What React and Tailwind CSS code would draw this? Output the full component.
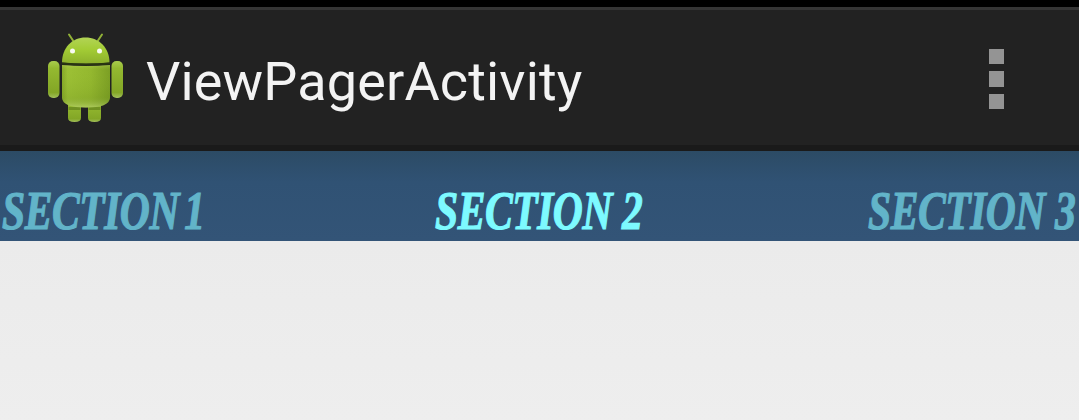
import React from 'react';

function AndroidLogo() {
  return (
    <svg className="mt-[3px] ml-[44px] h-[96px] w-[84px] shrink-0" viewBox="0 0 84 96">
      <defs>
        <linearGradient id="body" x1="0" x2="1" y1="0" y2="0">
          <stop offset="0" stopColor="#86a828" />
          <stop offset="0.12" stopColor="#9cc035" />
          <stop offset="0.6" stopColor="#94b82f" />
          <stop offset="1" stopColor="#7c9f24" />
        </linearGradient>
        <linearGradient id="head" x1="0" x2="0" y1="0" y2="1">
          <stop offset="0" stopColor="#b2d455" />
          <stop offset="0.45" stopColor="#a3cc35" />
          <stop offset="1" stopColor="#8cb02c" />
        </linearGradient>
        <linearGradient id="limb" x1="0" x2="0" y1="0" y2="1">
          <stop offset="0" stopColor="#a9cc4d" />
          <stop offset="0.2" stopColor="#94b930" />
          <stop offset="0.85" stopColor="#83a626" />
          <stop offset="1" stopColor="#a2bf5b" />
        </linearGradient>
        <linearGradient id="shade" x1="0" x2="0" y1="0" y2="1">
          <stop offset="0" stopColor="#d1e77d" stopOpacity="0.3" />
          <stop offset="0.12" stopColor="#8eb32b" stopOpacity="0" />
          <stop offset="0.75" stopColor="#587914" stopOpacity="0.15" />
          <stop offset="1" stopColor="#c6dc88" stopOpacity="0.5" />
        </linearGradient>
      </defs>
      <path d="M25 3.5L30 11M58 3.5L53 11" stroke="#90b037" strokeWidth="2" strokeLinecap="round" />
      <path d="M24 70H37V87Q37 91 30.500 91Q24 91 24 87ZM44 70H57V87Q57 91 50.500 91Q44 91 44 87Z" fill="url(#limb)" />
      <path d="M24.500 76H36.500V79H24.500ZM44.500 76H56.500V79H44.500Z" fill="#4c6714" opacity=".45" />
      <rect x="4" y="30" width="11.500" height="37" rx="5" fill="url(#limb)" />
      <rect x="67.500" y="30" width="11.500" height="37" rx="5" fill="url(#limb)" />
      <path d="M18 31.500C18 17 28 6.500 41.500 6.500C55 6.500 65.500 17 65.500 31.500Q42 34 18 31.500Z" fill="url(#head)" />
      <path d="M18 34Q42 36 66 34V67Q65 76.500 42 76.500Q19 76.500 18 67Z" fill="url(#body)" />
      <path d="M18 34Q42 36 66 34V67Q65 76.500 42 76.500Q19 76.500 18 67Z" fill="url(#shade)" />
      <path d="M18 32.500Q42 34.500 66 32.500" fill="none" stroke="#293511" strokeWidth="1.800" />
      <circle cx="28.500" cy="20" r="2.500" fill="#f8faf3" />
      <circle cx="55.500" cy="20" r="2.500" fill="#f8faf3" />
    </svg>
  );
}

function Tab({ label, active = false, tight = false }) {
  return (
    <div className={active ? 'w-[211px] text-[#7dfaff]' : 'w-[211px] text-[#62b4c9]'}>
      <span
        className={`inline-block origin-left scale-x-[0.77] whitespace-nowrap font-['Liberation_Serif'] text-[54px] leading-[60px] font-bold italic tracking-[-0.6px] [-webkit-text-stroke:1.2px_currentColor] ${tight ? '[word-spacing:-6px]' : ''}`}
      >
        {label}
      </span>
    </div>
  );
}

export default function App() {
  return (
    <div className="flex h-[420px] w-[1079px] flex-col overflow-hidden bg-[#ececec]">
      <div className="h-[7px] shrink-0 bg-black" />
      <header className="flex h-[144px] shrink-0 items-center border-t-[3px] border-b-[6px] border-t-[#353535] border-b-[#1a1a1a] bg-[#222222]">
        <AndroidLogo />
        <h1 className="ml-[18px] pt-[8px] font-[Roboto] text-[54px] leading-[64px] font-normal tracking-[0.15px] whitespace-nowrap text-[#f3f3f3]">
          ViewPagerActivity
        </h1>
        <button aria-label="More options" className="mr-[75px] ml-auto flex flex-col gap-[7px] pt-[3px]">
          <span className="size-[15.500px] bg-[#949494]" />
          <span className="size-[15.500px] bg-[#949494]" />
          <span className="size-[15.500px] bg-[#949494]" />
        </button>
      </header>
      <nav className="flex h-[90px] shrink-0 gap-[222px] overflow-hidden bg-linear-to-b from-[#2c4b65] via-[#305274] via-35% to-[#335477] pt-[30px] pl-[2px]">
        <Tab label="SECTION 1" tight />
        <Tab label="SECTION 2" active />
        <Tab label="SECTION 3" />
      </nav>
      <main className="grow bg-linear-to-b from-[#ebebeb] to-[#eeeeee]" />
    </div>
  );
}
